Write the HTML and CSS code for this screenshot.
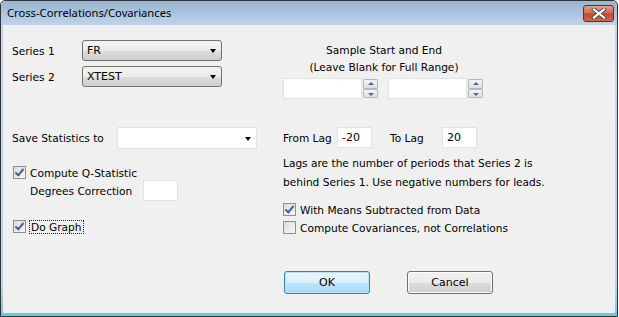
FILE: index.html
```html
<!DOCTYPE html>
<html>
<head>
<meta charset="utf-8">
<link rel="stylesheet" href="styles.css">
</head>
<body>
<div class="window">
  <div class="titlebar">
    <span class="title">Cross-Correlations/Covariances</span>
    <div class="close">
      <svg width="16" height="11" viewBox="0 0 16 11">
        <path d="M3 1.5 L13 9.5 M13 1.5 L3 9.5" stroke="#4a4a4a" stroke-width="4" stroke-linecap="square"/>
        <path d="M3 1.5 L13 9.5 M13 1.5 L3 9.5" stroke="#ffffff" stroke-width="2.2" stroke-linecap="square"/>
      </svg>
    </div>
  </div>
  <div class="client">
    <div class="left">
      <div class="row series1">
        <span class="lbl w-series">Series 1</span>
        <div class="combo"><span>FR</span><i class="arrow"></i></div>
      </div>
      <div class="row series2">
        <span class="lbl w-series">Series 2</span>
        <div class="combo"><span>XTEST</span><i class="arrow"></i></div>
      </div>
      <div class="row savestats">
        <span class="lbl w-save">Save Statistics to</span>
        <div class="combo white"><span></span><i class="arrow"></i></div>
      </div>
      <div class="check qstat"><span class="box checked"></span><span>Compute Q-Statistic</span></div>
      <div class="row degrees">
        <span class="lbl w-deg">Degrees Correction</span>
        <div class="edit deg"></div>
      </div>
      <div class="check dograph"><span class="box checked"></span><span class="focus">Do Graph</span></div>
    </div>
    <div class="right">
      <div class="sample-head">Sample Start and End<br>(Leave Blank for Full Range)</div>
      <div class="spinrow">
        <div class="edit spinedit"></div>
        <div class="spin"><span class="up"></span><span class="down"></span></div>
        <div class="edit spinedit second"></div>
        <div class="spin"><span class="up"></span><span class="down"></span></div>
      </div>
      <div class="row lagrow">
        <span class="lbl w-from">From Lag</span>
        <div class="edit lag">-20</div>
        <span class="lbl w-to">To Lag</span>
        <div class="edit lag">20</div>
      </div>
      <p class="note">Lags are the number of periods that Series 2 is<br>behind Series 1. Use negative numbers for leads.</p>
      <div class="check r first"><span class="box checked"></span><span>With Means Subtracted from Data</span></div>
      <div class="check r"><span class="box"></span><span>Compute Covariances, not Correlations</span></div>
      <div class="buttons">
        <div class="btn ok">OK</div>
        <div class="btn cancel">Cancel</div>
      </div>
    </div>
  </div>
</div>
</body>
</html>
```
FILE: styles.css
```css
html, body {
  margin: 0;
  padding: 0;
  background: #ffffff;
}
.window {
  width: 618px;
  height: 317px;
  box-sizing: border-box;
  border: 1px solid #343434;
  border-radius: 5px 5px 0 0;
  background: linear-gradient(to bottom, #c2d6ea, #bcd4ec 90%, #64c8e6);
  display: flex;
  flex-direction: column;
  font-family: "DejaVu Sans", sans-serif;
  font-size: 10.6px;
  color: #000;
  overflow: hidden;
}
.titlebar {
  height: 24px;
  flex: none;
  display: flex;
  align-items: flex-start;
  justify-content: space-between;
  background: linear-gradient(to bottom, #99b4d1, #a9c2dc 45%, #bfd4ea);
  border-radius: 4px 4px 0 0;
}
.title {
  font-family: "Noto Sans", sans-serif;
  font-size: 11.2px;
  color: #000;
  padding: 4px 0 0 6px;
  line-height: 15px;
}
.close {
  margin: 4px 3px 0 0;
  width: 29px;
  height: 15px;
  border: 1px solid #6b2a22;
  border-radius: 3px;
  background: linear-gradient(to bottom, #e2a08e, #cf6a52 45%, #bd4a33 55%, #d06b50);
  display: flex;
  align-items: center;
  justify-content: center;
}
.close svg { display: block; }
.client {
  flex: 1;
  margin: 0 2px 3px 2px;
  background: #f0f0f0;
  display: grid;
  grid-template-columns: 280px 1fr;
}
.left {
  padding: 15px 0 0 9px;
}
.row {
  display: flex;
  align-items: center;
  height: 21px;
}
.lbl { flex: none; white-space: nowrap; }
.w-series { width: 70px; }
.w-save { width: 105px; }
.w-deg { width: 113px; }
.series2 { margin-top: 5px; }
.savestats { margin-top: 40px; height: 22px; }
.combo {
  width: 140px;
  height: 21px;
  box-sizing: border-box;
  border: 1px solid #707070;
  border-radius: 3px;
  background: linear-gradient(to bottom, #f3f3f3, #ebebeb 50%, #dddddd 52%, #cfcfcf);
  display: flex;
  align-items: center;
  justify-content: space-between;
  padding: 0 5px 0 4px;
  font-size: 11px;
}
.combo.white {
  height: 22px;
  background: #ffffff;
  border: 1px solid #e2e2e2;
  border-radius: 0;
}
.arrow {
  width: 0;
  height: 0;
  border-left: 3.5px solid transparent;
  border-right: 3.5px solid transparent;
  border-top: 4px solid #000;
  margin-top: 1px;
}
.edit {
  background: #ffffff;
  border: 1px solid #e2e2e2;
  box-sizing: border-box;
  height: 21px;
}
.check {
  display: flex;
  align-items: center;
  height: 13px;
  white-space: nowrap;
}
.box {
  width: 13px;
  height: 13px;
  box-sizing: border-box;
  border: 1px solid #8e8f8f;
  background: linear-gradient(135deg, #dcdcdc, #f6f6f6);
  margin-right: 4px;
  flex: none;
  position: relative;
}
.box.checked::after {
  content: "";
  position: absolute;
  left: 3px;
  top: 0px;
  width: 3px;
  height: 7px;
  border-right: 2px solid #4a5f97;
  border-bottom: 2px solid #4a5f97;
  transform: rotate(40deg);
}
.left .check { margin-left: 1px; }
.qstat { margin-top: 17px; }
.degrees { margin-top: 1px; padding-left: 18px; }
.deg { width: 35px; }
.dograph { margin-top: 19px; }
.focus {
  outline: 1px dotted #222;
  outline-offset: 0px;
  padding: 0 1px;
  line-height: 12px;
}
.right {
  padding: 17px 0 0 0;
}
.sample-head {
  width: 202px;
  text-align: center;
  line-height: 17px;
  height: 34px;
}
.spinrow {
  display: flex;
  margin-top: 2px;
  height: 21px;
}
.spinedit { width: 79px; }
.spinedit.second { margin-left: 10px; }
.spin {
  width: 15px;
  margin-left: 1px;
  display: flex;
  flex-direction: column;
  justify-content: space-between;
  padding: 1px 0;
}
.spin span {
  height: 8px;
  border: 1px solid #b8b8b8;
  border-radius: 1px;
  background: linear-gradient(to bottom, #f4f4f4, #dedede);
  position: relative;
}
.spin span::after {
  content: "";
  position: absolute;
  left: 4px;
  top: 2px;
  border-left: 3px solid transparent;
  border-right: 3px solid transparent;
}
.spin .up::after { border-bottom: 3px solid #4e6598; }
.spin .down::after { border-top: 3px solid #4e6598; top: 3px; }
.lagrow { margin-top: 28px; }
.w-from { width: 54px; }
.w-to { width: 52px; margin-left: 18px; }
.lag { width: 35px; padding-left: 4px; line-height: 19px; font-size: 11px; }
.note {
  margin: 6px 0 0 0;
  line-height: 19px;
  white-space: nowrap;
}
.check.r.first { margin-top: 11px; }
.check.r + .check.r { margin-top: 5px; }
.buttons {
  display: flex;
  margin-top: 37px;
  margin-left: 1px;
  gap: 37px;
}
.btn {
  width: 86px;
  height: 23px;
  box-sizing: border-box;
  border-radius: 3px;
  display: flex;
  align-items: center;
  justify-content: center;
  font-size: 11px;
}
.ok {
  border: 1px solid #3c7fb1;
  box-shadow: inset 0 0 0 1px #b9e3f7;
  background: linear-gradient(to bottom, #eaf6fd, #d9f0fc 50%, #bee6fd 52%, #a7d9f5);
}
.cancel {
  border: 1px solid #707070;
  box-shadow: inset 0 0 0 1px #fcfcfc;
  background: linear-gradient(to bottom, #f2f2f2, #ebebeb 50%, #dddddd 52%, #cfcfcf);
}
```
